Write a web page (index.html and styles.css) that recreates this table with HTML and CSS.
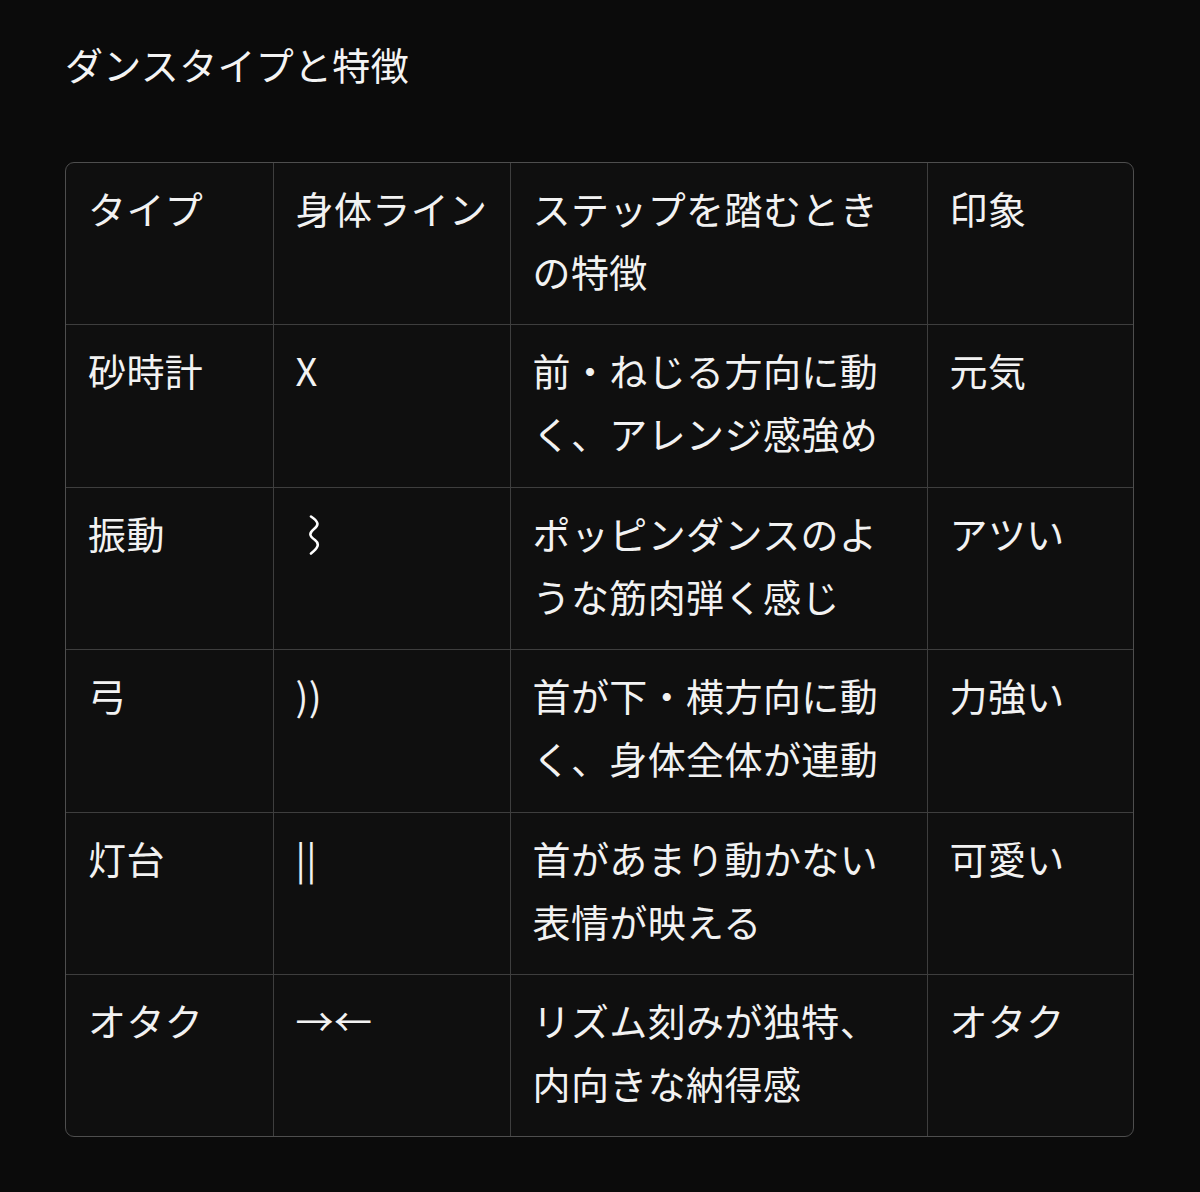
FILE: index.html
```html
<!DOCTYPE html>
<html lang="ja">
<head>
<meta charset="utf-8">
<link rel="stylesheet" href="styles.css">
</head>
<body>
<main class="page">
  <h1 class="title">ダンスタイプと特徴</h1>
  <div class="table-wrap">
    <table class="dance">
      <colgroup>
        <col class="c1"><col class="c2"><col class="c3"><col class="c4">
      </colgroup>
      <thead>
        <tr><th>タイプ</th><th>身体ライン</th><th>ステップを踏むときの特徴</th><th>印象</th></tr>
      </thead>
      <tbody>
        <tr><td>砂時計</td><td class="sym">X</td><td>前・ねじる方向に動く、アレンジ感強め</td><td>元気</td></tr>
        <tr><td>振動</td><td class="sym"><svg class="wave" width="16" height="40" viewBox="0 0 16 40"><path d="M5 1.5 C 13 7, 13 10, 8 14 C 3 18, 3 21, 9 25 C 14 29, 12 33, 5 38.5" fill="none" stroke="#fff" stroke-width="2.6" stroke-linecap="round"/></svg></td><td>ポッピンダンスのような筋肉弾く感じ</td><td>アツい</td></tr>
        <tr><td>弓</td><td class="sym">))</td><td>首が下・横方向に動く、身体全体が連動</td><td>力強い</td></tr>
        <tr><td>灯台</td><td class="sym">||</td><td>首があまり動かない表情が映える</td><td>可愛い</td></tr>
        <tr><td>オタク</td><td class="sym">→←</td><td>リズム刻みが独特、内向きな納得感</td><td>オタク</td></tr>
      </tbody>
    </table>
  </div>
</main>
</body>
</html>
```

FILE: styles.css
```css
html, body {
  margin: 0;
  padding: 0;
  background: #0b0b0b;
}
body {
  width: 1200px;
  height: 1192px;
  color: #f2f2f2;
  font-family: "Noto Sans CJK JP", "Noto Sans", sans-serif;
}
.page {
  padding: 35px 66px 0 65px;
}
.title {
  margin: 0;
  font-size: 38px;
  font-weight: 400;
  line-height: 57px;
  letter-spacing: 0.3px;
  color: #f4f4f4;
}
.table-wrap {
  margin-top: 70px;
  border: 1px solid #4e4e4e;
  border-radius: 9px;
  overflow: hidden;
  background: #0f0f0f;
  width: 1067px;
}
.dance {
  width: 100%;
  table-layout: fixed;
  border-collapse: collapse;
}
.c1 { width: 207px; }
.c2 { width: 237px; }
.c3 { width: 417px; }
.c4 { width: auto; }
.dance th, .dance td {
  text-align: left;
  vertical-align: top;
  font-size: 38px;
  font-weight: 400;
  line-height: 63px;
  letter-spacing: 0.4px;
  padding: 13px 22px 21px 22px;
  height: 127.4px;
  border-right: 1px solid #3e3e3e;
  border-bottom: 1px solid #3e3e3e;
  color: #f2f2f2;
}
.dance th:last-child, .dance td:last-child { border-right: none; }
.dance tbody tr:last-child td { border-bottom: none; }
.sym {
  font-family: "Noto Sans CJK JP", "Noto Sans", sans-serif;
}
.wave {
  display: inline-block;
  vertical-align: middle;
  margin-left: 10px;
  margin-top: -6px;
}
```
